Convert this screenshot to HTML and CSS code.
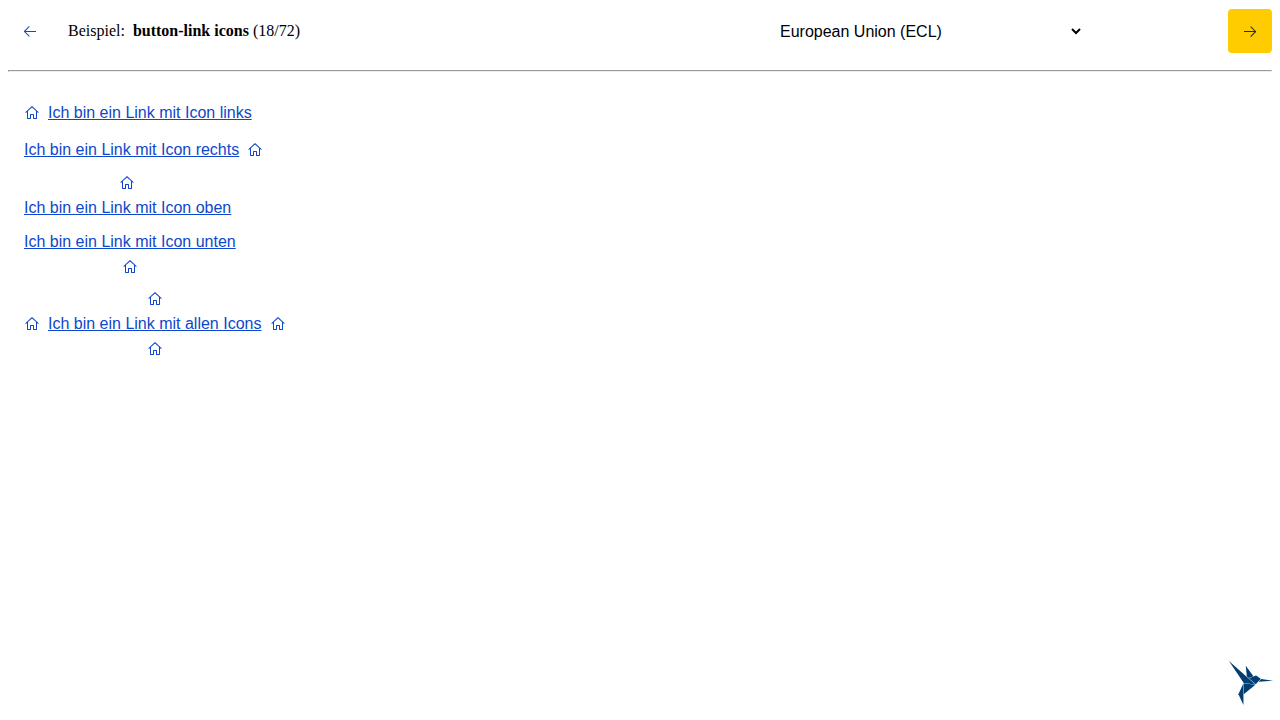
FILE: index.html
```
<!DOCTYPE html>
<html lang="de">
<head>
<meta charset="utf-8">
<title>button-link icons</title>
<link rel="stylesheet" href="styles.css">
</head>
<body>
<svg class="sprite" aria-hidden="true">
  <symbol id="home" viewBox="0 0 16 16"><path d="M8.36 1.37l6.36 5.8-.71.71L13 6.964v6.526l-.5.5h-3l-.5-.5v-3.5H7v3.5l-.5.5h-3l-.5-.5V6.972L2 7.88l-.71-.71 6.35-5.8h.72zM4 6.063v6.927h2v-3.5l.5-.5h3l.5.5v3.5h2V6.057L8 2.43 4 6.063z"/></symbol>
</svg>
<header class="toolbar">
  <button class="nav" aria-label="Zurück"><svg class="icon" viewBox="0 0 16 16"><path d="M7 3.093l-5 5V8.8l5 5 .707-.707-4.146-4.147H14v-1H3.56L7.708 3.8 7 3.093z"/></svg></button>
  <div class="title">Beispiel: <span class="name"><b>button-link icons</b> (18/72)</span></div>
  <select class="theme"><option>European Union (ECL)</option></select>
  <button class="nav next" aria-label="Weiter"><svg class="icon" viewBox="0 0 16 16"><path d="M9 13.887l5-5V8.18l-5-5-.707.707 4.146 4.147H2v1h10.44L8.293 13.18l.707.707z"/></svg></button>
</header>
<hr class="rule">
<main class="examples">
  <a class="link left" href="#"><svg class="icon"><use href="#home"/></svg><span class="label">Ich bin ein Link mit Icon links</span></a>
  <a class="link right" href="#"><span class="label">Ich bin ein Link mit Icon rechts</span><svg class="icon"><use href="#home"/></svg></a>
  <a class="link column above" href="#"><svg class="icon"><use href="#home"/></svg><span class="label">Ich bin ein Link mit Icon oben</span></a>
  <a class="link column below" href="#"><span class="label">Ich bin ein Link mit Icon unten</span><svg class="icon"><use href="#home"/></svg></a>
  <a class="link column all" href="#"><svg class="icon"><use href="#home"/></svg><span class="row"><svg class="icon"><use href="#home"/></svg><span class="label">Ich bin ein Link mit allen Icons</span><svg class="icon trailing"><use href="#home"/></svg></span><svg class="icon"><use href="#home"/></svg></a>
</main>
<svg class="bird" viewBox="0 0 600 600" aria-label="KoliBri">
  <path d="M353 322L213 304V434L353 322Z"/>
  <path d="M209 564V304L149 434L209 564Z"/>
  <path d="M357 316L417 250L361 210L275 244L357 316Z"/>
  <path d="M329 218L237 92L250 222L272 241L329 218Z"/>
  <path d="M353 318L35 36L213 300L353 318Z"/>
  <path d="M391 286L565 272L421 252L391 286Z"/>
</svg>
</body>
</html>
```
FILE: styles.css
```
body {
  margin: 8px;
  background: #fff;
  color: #000;
  font: 16px "Liberation Serif", "Times New Roman", serif;
}
.sprite {
  display: none;
}
.toolbar {
  display: flex;
  align-items: center;
  height: 44px;
  padding-top: 1px;
}
.icon {
  display: block;
  flex: none;
  width: 16px;
  height: 16px;
  fill: currentColor;
}
.nav {
  display: grid;
  place-items: center;
  flex: none;
  width: 44px;
  height: 44px;
  padding: 0;
  border: 0;
  border-radius: 4px;
  background: none;
  color: #0e47cb;
}
.next {
  margin-left: auto;
  background: #ffcc00;
  color: #262b38;
}
.title {
  width: 708px;
  margin-left: 16px;
}
.name {
  margin-left: 4px;
}
.theme {
  width: 308px;
  height: 28px;
  border: 0;
  background: #fff;
  color: #000;
  font: 16px "Liberation Sans", Arial, sans-serif;
}
.rule {
  margin: 17px 0 0;
}
.examples {
  display: flex;
  flex-direction: column;
  align-items: flex-start;
  padding: 31px 16px 0;
}
.link {
  display: flex;
  align-items: center;
  gap: 8px;
  color: #0e47cb;
  font: 16px/20px "Liberation Sans", Arial, sans-serif;
}
.link,
.link:hover {
  text-decoration: none;
}
.label {
  text-decoration: underline;
}
.row {
  display: flex;
  align-items: center;
  gap: 8px;
}
.trailing {
  margin: 0 -0.5px 0 0.5px;
}
.right {
  margin-top: 17px;
}
.column {
  flex-direction: column;
  gap: 7px;
}
.above {
  margin-top: 15px;
}
.above .icon {
  margin-right: 1px;
}
.below {
  margin-top: 14px;
}
.all {
  margin-top: 16px;
}
.bird {
  position: fixed;
  right: 4px;
  bottom: 12px;
  width: 50px;
  height: 50px;
  fill: #003e73;
}
```
